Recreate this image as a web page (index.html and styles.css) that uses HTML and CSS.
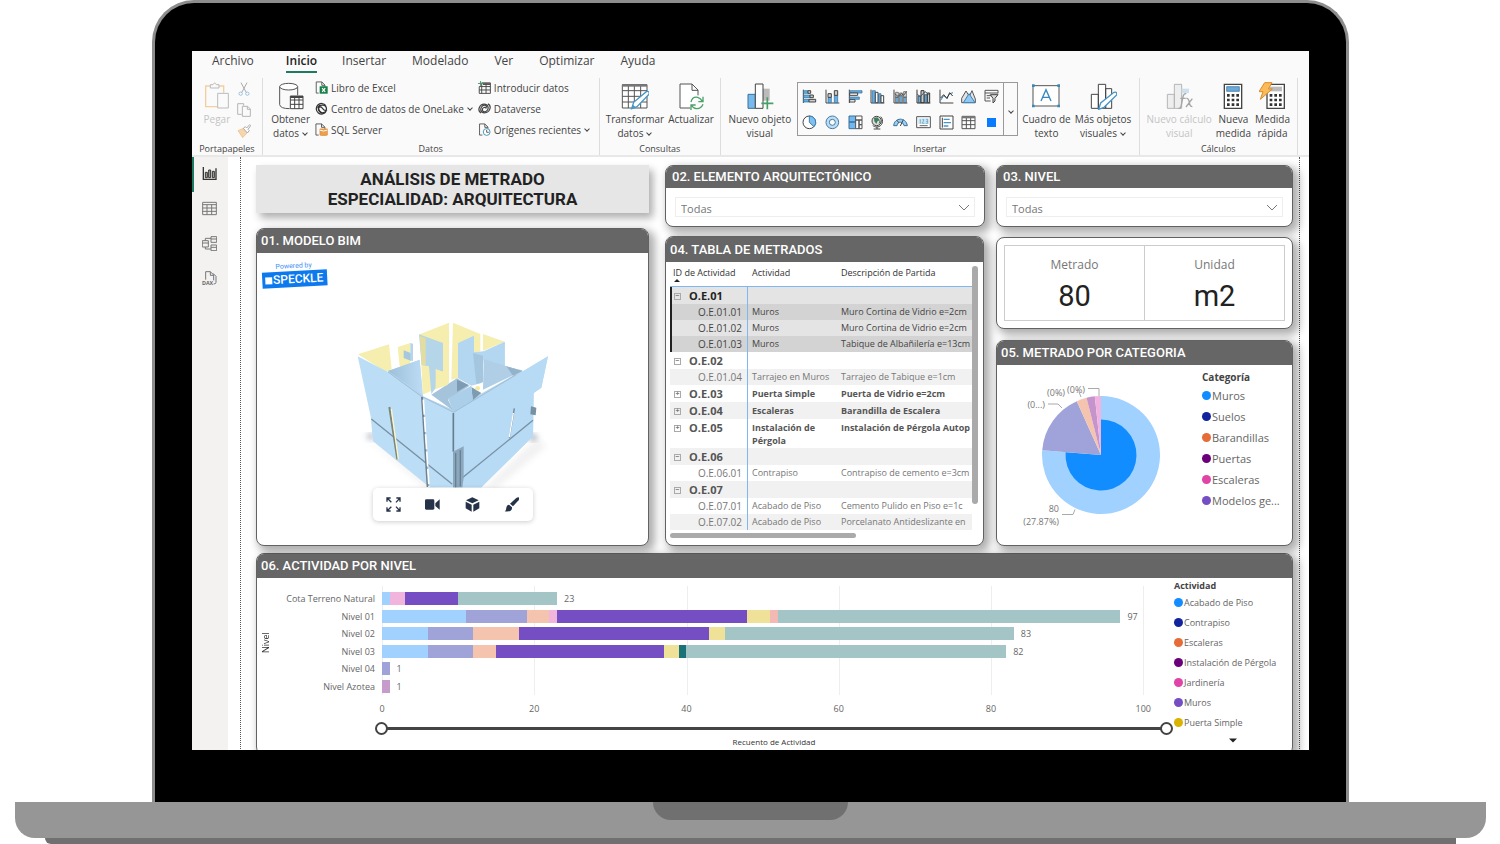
FILE: index.html
```html
<!DOCTYPE html>
<html lang="es">
<head>
<meta charset="utf-8">
<title>Análisis de metrado</title>
<link rel="stylesheet" href="styles.css">
</head>
<body>
<div class="lid">
<div class="screen">
<nav class="tabs">
<a href="#">Archivo</a><a href="#" class="current">Inicio</a><a href="#">Insertar</a><a href="#">Modelado</a><a href="#">Ver</a><a href="#">Optimizar</a><a href="#">Ayuda</a>
</nav>
<div class="ribbon">
<section class="group clipboard">
<div class="tools">
<button class="big off"><svg viewBox="0 0 84 84"><path d="M22 12H8v62h34M48 12h14v20" fill="none" stroke="#f3cf9f" stroke-width="4"/><path d="M22 18V8h8q5-10 10 0h8v10z" fill="#fafafa" stroke="#bbb" stroke-width="3"/><path d="M44 34h32v44H44z" fill="#fafafa" stroke="#bbb" stroke-width="3"/></svg><span>Pegar</span></button>
<div class="minis">
<button aria-label="Cortar"><svg viewBox="0 0 42 42"><path d="M12 2l16 30M30 2L14 32" stroke="#aaa" stroke-width="3"/><g fill="none" stroke="#9cc4df" stroke-width="3"><circle cx="11" cy="35" r="5"/><circle cx="31" cy="35" r="5"/></g></svg></button>
<button aria-label="Copiar"><svg viewBox="0 0 42 42"><path d="M14 34H2V2h18v6M16 10h16l8 8v22H16zM31 10v9h9" fill="none" stroke="#b5b5b5" stroke-width="3"/></svg></button>
<button aria-label="Copiar formato"><svg viewBox="0 0 42 42"><path d="M3 20l16-7 12 13-14 15z" fill="#f8d6ab" stroke="#e9bd88" stroke-width="2"/><path d="M19 13l6-5 4 4 9-10 3 3-8 11 4 4-6 7z" fill="#fff" stroke="#aaa" stroke-width="3"/></svg></button>
</div>
</div>
<h2>Portapapeles</h2>
</section>
<section class="group data">
<div class="tools">
<button class="big"><svg viewBox="0 0 84 84"><path d="M8 14v54q2 12 30 12M62 14v26" fill="none" stroke="#555" stroke-width="3"/><ellipse cx="35" cy="14" rx="27" ry="10" fill="#fff" stroke="#555" stroke-width="3"/><path d="M40 42h38v38H40zM40 54h38M40 67h38M53 42v38M66 42v38" fill="#fff" stroke="#444" stroke-width="3"/><path d="M40 42h38v6H40z" fill="#444"/></svg><span>Obtener<br>datos<i class="caret"></i></span></button>
<div class="list">
<button><svg viewBox="0 0 42 42"><path d="M12 39H4V3h18l10 10v6M22 3v11h10" fill="none" stroke="#555" stroke-width="3"/><path d="M15 17h26v24H15z" fill="#18804a"/><path d="M23 23l10 12M33 23L23 35" stroke="#fff" stroke-width="4"/></svg>Libro de Excel</button>
<button><svg viewBox="0 0 42 42"><g fill="none" stroke="#333" stroke-width="4"><path d="M35 12A17 17 0 1 0 36 30"/><path d="M8 18c7-12 29-11 29 4s-19 17-25 5c-5-9 4-15 10-9s6 13 17 7"/><path d="M17 8c-9 9-7 22 7 29"/></g></svg>Centro de datos de OneLake<i class="caret"></i></button>
<button><svg viewBox="0 0 42 42"><path d="M12 39H3V3h18l11 10v6M21 3v11h10" fill="none" stroke="#555" stroke-width="3"/><path d="M16 19h24v20q-12 5-24 0z" fill="#eca04d" stroke="#d98431" stroke-width="2"/><path d="M16 23q12 6 24 0" fill="none" stroke="#fff" stroke-width="3"/></svg>SQL Server</button>
</div>
<div class="list second">
<button><svg viewBox="0 0 42 42"><path d="M12 6h28v34H4V18M12 6v34M26 6v34M4 18h36M4 29h36" fill="none" stroke="#444" stroke-width="3"/><path d="M16 7h24v6H16z" fill="#555"/><path d="M8 0v16M0 8h16" stroke="#3c9c62" stroke-width="3"/></svg>Introducir datos</button>
<button><svg viewBox="0 0 42 42"><g fill="none" stroke="#444" stroke-width="4"><path d="M10 35C-4 28 5 7 20 7c13 0 16 14 9 21-6 6-15 4-15-3 0-8 10-10 13-4"/><path d="M32 6c14 7 6 29-11 29C8 35 6 22 13 14c7-6 16-4 15 4"/></g></svg>Dataverse</button>
<button><svg viewBox="0 0 42 42"><path d="M14 39H5V3h17l10 10v6M22 3v11h10" fill="none" stroke="#555" stroke-width="3"/><circle cx="28" cy="29" r="11" fill="#fff" stroke="#4191b8" stroke-width="3"/><path d="M28 22v8h7" fill="none" stroke="#555" stroke-width="3"/></svg>Orígenes recientes<i class="caret"></i></button>
</div>
</div>
<h2>Datos</h2>
</section>
<section class="group queries">
<div class="tools">
<button class="big"><svg viewBox="0 0 84 84"><path d="M4 8h74v70H4zM4 26h74M4 43h74M4 60h74M22 12v66M40 12v66M59 12v66" fill="#fff" stroke="#555" stroke-width="3"/><path d="M4 7h74v7H4z" fill="#777"/><path d="M32 80l6-19 38-32q10-3 8 8L48 74z" fill="#fff" stroke="#4596c6" stroke-width="4"/><path d="M32 80l4-12 7 7z" fill="#4596c6"/></svg><span>Transformar<br>datos<i class="caret"></i></span></button>
<button class="big"><svg viewBox="0 0 84 84"><path d="M40 78H9V6h36l18 18v16M45 6v19h18" fill="#fff" stroke="#555" stroke-width="3"/><g fill="none" stroke="#4ba06a" stroke-width="4"><path d="M42 60q4-17 20-14 9 2 14 12M78 44v15H64"/><path d="M78 67q-6 14-20 13-10-1-15-11M42 84V69h14"/></g></svg><span>Actualizar</span></button>
</div>
<h2>Consultas</h2>
</section>
<section class="group insert">
<div class="tools">
<button class="big"><svg viewBox="0 0 84 84"><path d="M6 37h22v42H6z" fill="#79b9ec" stroke="#38719f" stroke-width="3"/><path d="M51 20h20v36H51z" fill="#bbb"/><path d="M28 6h23v73H28z" fill="#fff" stroke="#444" stroke-width="3"/><path d="M64 46v36M46 64h36" stroke="#48a068" stroke-width="5"/></svg><span>Nuevo objeto<br>visual</span></button>
<div class="gallery">
<div class="visuals">
<button aria-label="Barras apiladas"><svg viewBox="0 0 45 45"><path d="M4 2v40" stroke="#444" stroke-width="3"/><path d="M5 5h13v8H5zM5 18h19v8H5zM5 31h16v8H5z" fill="#62aee8" stroke="#34698f" stroke-width="2"/><path d="M18 5h8v8h-8zM24 18h10v8H24zM21 31h20v8H21z" fill="#ccc" stroke="#444" stroke-width="3"/></svg></button>
<button aria-label="Columnas apiladas"><svg viewBox="0 0 45 45"><path d="M3 2v40h40" fill="none" stroke="#444" stroke-width="3"/><path d="M9 25h10v16H9zM28 19h10v22H28z" fill="#62aee8" stroke="#34698f" stroke-width="2"/><path d="M9 14h10v11H9zM28 5h10v14H28z" fill="#ccc" stroke="#444" stroke-width="3"/></svg></button>
<button aria-label="Barras agrupadas"><svg viewBox="0 0 45 45"><path d="M4 2v40" stroke="#444" stroke-width="3"/><path d="M5 5h37v7H5zM5 24h29v7H5z" fill="#62aee8" stroke="#34698f" stroke-width="2"/><path d="M5 12h24v7H5zM5 32h16v7H5z" fill="#fff" stroke="#444" stroke-width="3"/></svg></button>
<button aria-label="Columnas agrupadas"><svg viewBox="0 0 45 45"><path d="M3 2v40h40" fill="none" stroke="#444" stroke-width="3"/><path d="M7 5h9v36H7zM26 14h7v27h-7z" fill="#62aee8" stroke="#34698f" stroke-width="2"/><path d="M16 10h8v31h-8zM33 20h8v21h-8z" fill="#fff" stroke="#444" stroke-width="3"/></svg></button>
<button aria-label="Líneas y columnas apiladas"><svg viewBox="0 0 45 45"><path d="M3 2v40h40" fill="none" stroke="#444" stroke-width="3"/><path d="M8 24h8v17H8zM20 20h8v21h-8zM32 24h8v17h-8z" fill="#72b2df" stroke="#444" stroke-width="2"/><path d="M8 10h8v14H8zM20 12h8v8h-8zM32 8h8v16h-8z" fill="#ddd" stroke="#444" stroke-width="2"/><path d="M5 14l10 8 10-8 7 5 9-12" fill="none" stroke="#555" stroke-width="3"/></svg></button>
<button aria-label="Líneas y columnas agrupadas"><svg viewBox="0 0 45 45"><path d="M3 2v40h40" fill="none" stroke="#333" stroke-width="3"/><path d="M7 21h8v20H7zM26 17h8v24h-8z" fill="#62aee8" stroke="#333" stroke-width="2"/><path d="M15 5h9v36h-9zM34 12h7v29h-7z" fill="#ccc" stroke="#333" stroke-width="3"/><path d="M4 16l9 7 14-15 13 9" fill="none" stroke="#456" stroke-width="3"/></svg></button>
<button aria-label="Líneas"><svg viewBox="0 0 45 45"><path d="M3 2v40h40" fill="none" stroke="#444" stroke-width="3"/><path d="M5 34l9-14 9 6 10-12 9-3" fill="none" stroke="#3d86b8" stroke-width="3"/><path d="M5 27l9-10 10 12 8-18 9 10" fill="none" stroke="#333" stroke-width="3"/></svg></button>
<button aria-label="Áreas"><svg viewBox="0 0 45 45"><path d="M2 41V28L15 6l10 16L33 5l10 25v11z" fill="#e3e3e3" stroke="#555" stroke-width="3"/><path d="M7 41l17-27 18 27z" fill="#8fc8f3" stroke="#3981b5" stroke-width="3"/></svg></button>
<button aria-label="Segmentación"><svg viewBox="0 0 45 45"><path d="M20 36H3V4h39v9M3 12h39M8 20h13M8 27h10" fill="none" stroke="#555" stroke-width="3"/><path d="M19 17h23l-9 11v8l-6 6V28z" fill="#ddd" stroke="#444" stroke-width="3"/></svg></button>
<button aria-label="Circular"><svg viewBox="0 0 45 45"><circle cx="22" cy="22" r="19" fill="#fff" stroke="#444" stroke-width="3"/><path d="M22 22V3a19 19 0 0 1 14 32z" fill="#80bff0" stroke="#3981b5" stroke-width="3"/></svg></button>
<button aria-label="Anillo"><svg viewBox="0 0 45 45"><circle cx="22" cy="22" r="14" fill="none" stroke="#b9def8" stroke-width="9"/><g fill="none" stroke="#48799c" stroke-width="3"><circle cx="22" cy="22" r="19"/><circle cx="22" cy="22" r="9"/></g></svg></button>
<button aria-label="Rectángulos"><svg viewBox="0 0 45 45"><path d="M3 3h20v18H3zM3 21h20v20H3z" fill="#70b8ef" stroke="#3b719a" stroke-width="3"/><path d="M23 3h19v12H23zM23 15h10v26H23zM33 15h9v14h-9zM33 29h9v12h-9z" fill="#fff" stroke="#555" stroke-width="3"/></svg></button>
<button aria-label="Mapa"><svg viewBox="0 0 45 45"><circle cx="20" cy="18" r="14" fill="#ddd" stroke="#444" stroke-width="3"/><path d="M12 9l10-2 8 9-7 2-4 9-6-8zM29 16l4 6-7 5z" fill="#3f7d5c"/><path d="M32 5c11 11 5 30-11 31-6 0-10-2-13-5M21 36v6M11 42h20" fill="none" stroke="#444" stroke-width="3"/></svg></button>
<button aria-label="Medidor"><svg viewBox="0 0 45 45"><path d="M2 32C4 7 39 5 43 32H33c-3-14-19-14-21 0z" fill="#9acff5" stroke="#3b719a" stroke-width="3"/><path d="M22 33l9-19M12 16l5 7" stroke="#444" stroke-width="3"/></svg></button>
<button aria-label="Tarjeta"><svg viewBox="0 0 45 45"><path d="M2 5h41v33H2z" fill="#fff" stroke="#555" stroke-width="3"/><path d="M7 10h31v17H7z" fill="#cfe5f4"/><path d="M13 13v13M19 14h5l-5 11h6M30 13h5v12h-6M30 19h5" fill="none" stroke="#5097bd" stroke-width="2"/><path d="M11 32h24" stroke="#666" stroke-width="3"/></svg></button>
<button aria-label="Tarjeta múltiple"><svg viewBox="0 0 45 45"><path d="M3 3h39v39H3z" fill="#fff" stroke="#444" stroke-width="3"/><path d="M10 8v30" stroke="#444" stroke-width="3"/><path d="M14 13h18M14 23h22M14 33h14" stroke="#4596c6" stroke-width="4"/></svg></button>
<button aria-label="Tabla"><svg viewBox="0 0 45 45"><path d="M3 4h39v37H3zM3 17h39M3 29h39M16 5v36M29 5v36" fill="#fff" stroke="#555" stroke-width="3"/><path d="M3 4h39v6H3z" fill="#777"/></svg></button>
<button aria-label="Speckle"><svg viewBox="0 0 45 45"><path d="M9 9h27v27H9z" fill="#087bff"/></svg></button>
</div>
<button class="more" aria-label="Más visuales"><i class="caret"></i></button>
</div>
<button class="big"><svg viewBox="0 0 84 84"><path d="M3 11h78v61H3z" fill="#fff" stroke="#555" stroke-width="3"/><path d="M0 7h8v8H0zM76 7h8v8h-8zM0 68h8v8H0zM76 68h8v8h-8z" fill="#3789bd"/><path d="M27 57l15-34 15 34M33 46h18" fill="none" stroke="#3789bd" stroke-width="4"/></svg><span>Cuadro de<br>texto</span></button>
<button class="big"><svg viewBox="0 0 84 84"><path d="M7 37h21v42H7zM28 7h22v72H28zM50 20h18v59H50z" fill="#fff" stroke="#444" stroke-width="3"/><path d="M29 82l6-19 40-32q10-3 8 8L45 76z" fill="#fff" stroke="#4596c6" stroke-width="4"/></svg><span>Más objetos<br>visuales<i class="caret"></i></span></button>
</div>
<h2>Insertar</h2>
</section>
<section class="group calc">
<div class="tools">
<button class="big off"><svg viewBox="0 0 84 84"><path d="M7 37h21v42H7zM28 7h22v72H28z" fill="#eee" stroke="#b5b5b5" stroke-width="3"/><path d="M50 20h22v13H50z" fill="#cde0ee"/><path d="M64 35q-8-2-10 10l-6 28q-2 7-8 6M46 49h16M64 49q7-1 9 12t9 13M82 50L63 75" fill="none" stroke="#a5a5a5" stroke-width="4"/></svg><span>Nuevo cálculo<br>visual</span></button>
<button class="big"><svg viewBox="0 0 84 84"><path d="M16 7h52v72H16z" fill="#fff" stroke="#444" stroke-width="4"/><path d="M23 14h38v14H23z" fill="#68abdd" stroke="#366891" stroke-width="2"/><path d="M24 40h36M24 54h36M24 68h36" stroke="#333" stroke-width="8" stroke-dasharray="8 6"/></svg><span>Nueva<br>medida</span></button>
<button class="big"><svg viewBox="0 0 84 84"><path d="M24 7h52v72H24z" fill="#fff" stroke="#444" stroke-width="4"/><path d="M31 14h38v14H31z" fill="#bbb"/><path d="M32 40h36M32 54h36M32 68h36" stroke="#333" stroke-width="8" stroke-dasharray="8 6"/><path d="M17 2h22L28 21h12L4 52l8-23H0z" fill="#f9bb5b" stroke="#dd8b25" stroke-width="3"/></svg><span>Medida<br>rápida</span></button>
</div>
<h2>Cálculos</h2>
</section>
</div>
<div class="work">
<nav class="rail">
<a href="#" class="on" aria-label="Informe"><svg viewBox="0 0 45 45"><path d="M4 3v37h38V7" fill="none" stroke="#333" stroke-width="4"/><path d="M10 19h6v16h-6zM20 12h6v23h-6zM31 16h6v19h-6z" fill="#aaa" stroke="#333" stroke-width="3"/></svg></a>
<a href="#" aria-label="Tabla"><svg viewBox="0 0 45 45"><path d="M2 4h41v37H2zM2 11h41M2 21h41M2 31h41M15 11v30M29 11v30" fill="none" stroke="#777" stroke-width="3"/></svg></a>
<a href="#" aria-label="Modelo"><svg viewBox="0 0 45 45"><path d="M1 14h18v19H1zM1 21h18M27 2h17v17H27zM27 9h17M27 27h17v17H27zM27 34h17M10 14V7h17M10 33v6h17" fill="none" stroke="#777" stroke-width="3"/></svg></a>
<a href="#" aria-label="DAX"><svg viewBox="0 0 45 45"><path d="M11 26V2h14l10 10v16M25 2v11h10M33 7l9 9v18q0 5-7 5" fill="none" stroke="#777" stroke-width="3"/><text x="0" y="43" class="dax">DAX</text></svg></a>
</nav>
<main class="canvas">
<div class="top">
<div class="col left">
<h1>ANÁLISIS DE METRADO<br>ESPECIALIDAD: ARQUITECTURA</h1>
<section class="panel model">
<h3>01. MODELO BIM</h3>
<div class="speckle"><small>Powered by</small><b><i></i>SPECKLE</b></div>
<svg class="building" viewBox="40 55 600 510" role="img" aria-label="Modelo 3D">
<defs><linearGradient id="sh" x1="0" x2="1"><stop offset="0" stop-color="#9dbfd9"/><stop offset="1" stop-color="#bcdcf4"/></linearGradient><filter id="bl"><feGaussianBlur stdDeviation="9"/></filter></defs>
<path d="M70 408L300 560H440L590 415L620 440L470 565H260z" fill="#ddd" filter="url(#bl)" opacity=".4"/>
<path d="M80 408l20-8v22zM570 400l24 12-18 14z" fill="#7d8b98" filter="url(#bl)"/>
<path d="M55 164L148 134L156 208L140 218zM174 142L212 130V216L180 200zM240 104L328 69V250L250 284L245 185zM340 69L422 103V155L398 162L355 235L335 240zM430 103L495 126L430 153z" fill="#f5eeaf"/>
<path d="M145 214L240 180L250 290L340 330L540 216L430 180L495 126V200L548 212L560 300L345 420L180 300z" fill="#b4d5ed"/>
<path d="M145 214L240 181L248 285z" fill="url(#sh)"/>
<path d="M245 185L262 190L272 275L250 284z" fill="#f5eeaf"/>
<path d="M238 104L310 130V216L288 208V265L275 283L268 200L246 196z" fill="#b5d5e8"/>
<path d="M240 108L258 116V196H246z" fill="#e3dda2"/>
<path d="M355 130L403 108V158L432 155L495 126V200L432 178L425 250L395 258L355 236z" fill="#b3d6f1"/>
<path d="M400 160l30 8v80l-20 5z" fill="#a5c6df"/>
<path d="M192 152l23 9v23l-23-9z" fill="#a6c8df"/><path d="M212 130l8 2v52l-8-2z" fill="#b4d5ed"/>
<path d="M432 178L548 214L430 270z" fill="#b0cfe7"/>
<path d="M500 200L548 214L520 228z" fill="#94b3cb"/>
<path d="M275 285L352 236L390 258L325 300L342 334z" fill="#a5c4db"/><path d="M352 240l35 16-35 20zM395 262l30 18-26 22z" fill="#7d9bb2"/><path d="M325 296L395 258L400 305L342 338z" fill="#accfe9"/><circle cx="414" cy="266" r="7" fill="#f5e8a0"/>
<path d="M290 210l34 10v36l-36 12z" fill="#f5eeaf"/>
<path d="M54 170L145 217L245 290L342 338L555 212L625 170L605 264L582 280L580 410L425 563H270L100 425L93 350z" fill="#bbddf6"/>
<path d="M342 338L555 212L625 170L605 264L582 280L580 410L425 563H340z" fill="#b7daf5"/>
<path d="M145 217L245 290L342 338L530 225" fill="none" stroke="#94b1c6" stroke-width="2"/>
<path d="M95 358L338 554M368 534L580 362" stroke="#7890a2" stroke-width="4"/>
<path d="M341 340V456" stroke="#667e90" stroke-width="5"/>
<path d="M340 456l32-16v95l-4 28h-28z" fill="#8ba7bc"/><path d="M348 460v103M362 452v108" stroke="#678095" stroke-width="4"/>
<path d="M149 322l24 157" stroke="#7b8878" stroke-width="6"/><path d="M155 328l21 151" stroke="#fff5ca" stroke-width="4"/>
<path d="M247 292l17 270" stroke="#70818f" stroke-width="6"/><path d="M251 300l17 262" stroke="#fff" stroke-width="5" stroke-dasharray="45 7"/>
<path d="M524 326l-15 88" stroke="#6e889c" stroke-width="4"/><path d="M521 340l-12 72" stroke="#fff" stroke-width="4"/>
<path d="M574 320l16 4-2 23-16-3z" fill="#7892a5"/>
</svg>
<div class="viewer">
<button aria-label="Ajustar"><svg viewBox="0 0 45 45"><path d="M3 14V3h11M4 4l12 12M31 3h11v11M41 4L30 16M3 31v11h11M4 41l12-12M31 42h11V31M41 41L30 29" fill="none" stroke="#263248" stroke-width="4"/></svg></button>
<button aria-label="Cámara"><svg viewBox="0 0 45 45"><rect x="0" y="7" width="28" height="31" rx="4" fill="#263248"/><path d="M31 19L44 7v31L31 27z" fill="#263248"/></svg></button>
<button aria-label="Cubo"><svg viewBox="0 0 45 45"><path d="M22 1l19 9-19 9-19-9zM2 14l18 9v21L2 34zM43 14l-18 9v21l18-10z" fill="#263248"/></svg></button>
<button aria-label="Pincel"><svg viewBox="0 0 45 45"><path d="M44 1q4 5-3 12L27 28l-9-8L36 4q5-4 8-3z" fill="#263248"/><path d="M15 23l9 8c1 11-8 14-22 12 8-4 1-18 13-20z" fill="#263248"/></svg></button>
</div>
</section>
</div>
<div class="col middle">
<section class="panel filter">
<h3><label for="elemento">02. ELEMENTO ARQUITECTÓNICO</label></h3>
<div class="pick"><select id="elemento"><option>Todas</option></select><svg viewBox="0 0 12 7"><path d="M1 1l5 5 5-5" fill="none" stroke="#777"/></svg></div>
</section>
<section class="panel sheet">
<h3>04. TABLA DE METRADOS</h3>
<div class="scroller">
<div class="clip">
<table>
<colgroup><col class="c1"><col class="c2"><col class="c3"></colgroup>
<thead><tr><th>ID de Actividad<i></i></th><th>Actividad</th><th>Descripción de Partida</th></tr></thead>
<tbody>
<tr class="g sel"><td><button class="box">−</button>O.E.01</td><td></td><td></td></tr>
<tr class="sel dark"><td>O.E.01.01</td><td>Muros</td><td>Muro Cortina de Vidrio e=2cm</td></tr>
<tr class="sel"><td>O.E.01.02</td><td>Muros</td><td>Muro Cortina de Vidrio e=2cm</td></tr>
<tr class="sel dark"><td>O.E.01.03</td><td>Muros</td><td>Tabique de Albañilería e=13cm</td></tr>
<tr class="g"><td><button class="box">−</button>O.E.02</td><td></td><td></td></tr>
<tr class="alt"><td>O.E.01.04</td><td>Tarrajeo en Muros</td><td>Tarrajeo de Tabique e=1cm</td></tr>
<tr class="g"><td><button class="box">+</button>O.E.03</td><td>Puerta Simple</td><td>Puerta de Vidrio e=2cm</td></tr>
<tr class="g alt"><td><button class="box">+</button>O.E.04</td><td>Escaleras</td><td>Barandilla de Escalera</td></tr>
<tr class="g tall"><td><button class="box">+</button>O.E.05</td><td>Instalación de<br>Pérgola</td><td>Instalación de Pérgola Autop</td></tr>
<tr class="g alt"><td><button class="box">−</button>O.E.06</td><td></td><td></td></tr>
<tr><td>O.E.06.01</td><td>Contrapiso</td><td>Contrapiso de cemento e=3cm</td></tr>
<tr class="g alt"><td><button class="box">−</button>O.E.07</td><td></td><td></td></tr>
<tr><td>O.E.07.01</td><td>Acabado de Piso</td><td>Cemento Pulido en Piso e=1c</td></tr>
<tr class="alt"><td>O.E.07.02</td><td>Acabado de Piso</td><td>Porcelanato Antideslizante en</td></tr>
</tbody>
</table>
</div>
<div class="vbar"></div>
</div>
<div class="hbar"></div>
</section>
</div>
<div class="col right">
<section class="panel filter">
<h3><label for="nivel">03. NIVEL</label></h3>
<div class="pick"><select id="nivel"><option>Todas</option></select><svg viewBox="0 0 12 7"><path d="M1 1l5 5 5-5" fill="none" stroke="#777"/></svg></div>
</section>
<section class="panel cards">
<div><span>Metrado</span><strong>80</strong></div><div><span>Unidad</span><strong>m2</strong></div>
</section>
<section class="panel category">
<h3>05. METRADO POR CATEGORIA</h3>
<div class="piebox">
<svg class="pie" viewBox="0 0 180 175">
<path d="M86 86V27A59 59 0 1 1 27.2 81.3z" fill="#a0d1ff"/><path d="M86 86V50.5A35.5 35.5 0 1 1 50.6 83.2z" fill="#118dff"/>
<path d="M86 86L27.2 81.3A59 59 0 0 1 61.8 32.2z" fill="#a0a3da"/><path d="M86 86L61.8 32.2A59 59 0 0 1 71.5 28.8z" fill="#f5c4af"/><path d="M86 86L71.5 28.8A59 59 0 0 1 79.8 27.3z" fill="#c594cc"/><path d="M86 86L79.8 27.3A59 59 0 0 1 86 27z" fill="#f0b2df"/>
<path d="M33 35h10l4 4M73 19.500h11V27M64 23l2 5M47 145.500h11l2-5" fill="none" stroke="#aaa"/>
<text x="50" y="27" text-anchor="end">(0%)</text><text x="70" y="24" text-anchor="end">(0%)</text><text x="30" y="39" text-anchor="end">(0...)</text><text x="44" y="143" text-anchor="end">80</text><text x="44" y="156" text-anchor="end">(27.87%)</text>
</svg>
<ul class="legend"><li class="name">Categoría</li><li><i class="k1"></i>Muros</li><li><i class="k2"></i>Suelos</li><li><i class="k3"></i>Barandillas</li><li><i class="k4"></i>Puertas</li><li><i class="k5"></i>Escaleras</li><li><i class="k6"></i>Modelos ge...</li></ul>
</div>
</section>
</div>
</div>
<section class="panel activity">
<h3>06. ACTIVIDAD POR NIVEL</h3>
<div class="chart">
<div class="ytitle">Nivel</div>
<div class="ylabels"><span>Cota Terreno Natural</span><span>Nivel 01</span><span>Nivel 02</span><span>Nivel 03</span><span>Nivel 04</span><span>Nivel Azotea</span></div>
<div class="plot">
<div class="bars">
<div><i class="blue" style="width:.971%"></i><i class="pink" style="width:1.942%"></i><i class="purple" style="width:6.797%"></i><i class="teal" style="width:12.623%"></i><b>23</b></div>
<div><i class="blue" style="width:10.681%"></i><i class="lilac" style="width:7.768%"></i><i class="peach" style="width:2.913%"></i><i class="pink" style="width:.971%"></i><i class="purple" style="width:24.275%"></i><i class="yellow" style="width:2.913%"></i><i class="rose" style="width:.971%"></i><i class="teal" style="width:43.695%"></i><b>97</b></div>
<div><i class="blue" style="width:5.826%"></i><i class="lilac" style="width:5.826%"></i><i class="peach" style="width:5.826%"></i><i class="purple" style="width:24.275%"></i><i class="yellow" style="width:1.942%"></i><i class="teal" style="width:36.898%"></i><b>83</b></div>
<div><i class="blue" style="width:5.826%"></i><i class="lilac" style="width:5.826%"></i><i class="peach" style="width:2.913%"></i><i class="purple" style="width:21.362%"></i><i class="yellow" style="width:1.942%"></i><i class="deep" style="width:.971%"></i><i class="teal" style="width:40.782%"></i><b>82</b></div>
<div><i class="lilac" style="width:.971%"></i><b>1</b></div>
<div><i class="mauve" style="width:.971%"></i><b>1</b></div>
</div>
<div class="ticks"><span>0</span><span>20</span><span>40</span><span>60</span><span>80</span><span>100</span></div>
<div class="range"><input type="range" aria-label="Mínimo" min="0" max="100" value="0"><input type="range" aria-label="Máximo" min="0" max="100" value="100"></div>
<div class="xtitle">Recuento de Actividad</div>
</div>
<ul class="legend"><li class="name">Actividad</li><li><i class="k1"></i>Acabado de Piso</li><li><i class="k2"></i>Contrapiso</li><li><i class="k3"></i>Escaleras</li><li><i class="k4"></i>Instalación de Pérgola</li><li><i class="k5"></i>Jardinería</li><li><i class="k6"></i>Muros</li><li><i class="k7"></i>Puerta Simple</li><li class="next"><svg viewBox="0 0 10 5"><path d="M0 0h10L5 5z" fill="#222"/></svg></li></ul>
</div>
</section>
</main>
</div>
</div>
</div>
<div class="base"><div class="notch"></div></div>
<div class="foot"></div>
</body>
</html>
```
FILE: styles.css
```css
* { box-sizing: border-box; }
body {
  margin: 0; height: 100vh; overflow: hidden; background: #fff;
  display: flex; flex-direction: column;
  font-family: "Open Sans", "Noto Sans", sans-serif; font-size: 10px; color: #444;
}
h1, h2, h3, ul { margin: 0; padding: 0; }
ul { list-style: none; }
i { font-style: normal; }
button { border: 0; background: none; padding: 0; margin: 0; font: inherit; color: inherit; }
a { color: inherit; text-decoration: none; }
svg { display: block; }

.lid {
  flex: 1; min-height: 0; display: flex; margin: 0 151px 0 152px; padding: 48px 37px 52px;
  border: 3px solid #8d8d8d; border-bottom: 0; border-radius: 42px 42px 0 0; background: #000;
}
.screen { flex: 1; min-width: 0; overflow: hidden; background: #fff; display: flex; flex-direction: column; }
.base { height: 36px; margin: 0 14px 0 15px; background: #969696; border-radius: 0 0 20px 20px; flex: none; display: flex; justify-content: center; }
.notch { width: 195px; height: 18px; background: #707070; border-radius: 0 0 18px 18px; }
.foot { height: 6px; margin: 0 44px 0 45px; background: #707070; border-radius: 0 0 0 6px; flex: none; }

.tabs { display: flex; gap: 26px; padding: 0 20px; height: 25px; background: #fafafa; font-size: 12px; line-height: 20px; flex: none; }
.tabs .current { font-weight: 600; color: #222; border-bottom: 2px solid #1f7a62; height: 22px; margin-left: 6px; }
.tabs .current + a { margin-left: -1px; }
.ribbon { display: flex; flex: none; height: 81px; background: #fafafa; border-bottom: 2px solid #e8e8e8; }
.group { display: flex; flex-direction: column; justify-content: space-between; border-right: 1px solid #ddd; margin: 2px 0 0; padding: 4px 0 0; }
.group h2 { font-size: 9px; font-weight: 400; line-height: 12px; text-align: center; }
.tools { display: flex; justify-content: center; align-items: flex-start; }
.clipboard { flex: 70 1 0; }
.data { flex: 337 1 0; }
.queries { flex: 121 1 0; }
.insert { flex: 419 1 0; }
.calc { flex: 158 1 0; margin-right: 11px; }
.big { display: flex; flex-direction: column; align-items: center; line-height: 14px; white-space: nowrap; }
.big svg { width: 28px; height: 28px; margin-bottom: 2px; }
.off { color: #c4c4c4; }
.caret { display: inline-block; width: 4px; height: 4px; margin: 0 1px 2px 4px; border: solid #444; border-width: 0 1px 1px 0; transform: rotate(45deg); }
.minis { display: flex; flex-direction: column; gap: 7px; margin-left: 6px; }
.minis svg { width: 14px; height: 14px; }
.list { display: flex; flex-direction: column; margin-left: 5px; margin-top: -5px; }
.list button { display: flex; align-items: center; height: 21px; white-space: nowrap; }
.list svg { width: 13px; height: 13px; margin-right: 3px; }
.insert .tools { gap: 4px; }
.queries .tools, .calc .tools { gap: 4px; }
.gallery { display: flex; border: 1px solid #999; height: 54px; margin-left: 2px; }
.visuals { display: grid; grid-template-columns: repeat(9, 1fr); align-items: center; justify-items: center; width: 205px; }
.visuals svg { width: 15px; height: 15px; }
.more { width: 14px; border-left: 1px solid #999; }
.more .caret { margin: 0; }

.work { display: flex; flex: 1; min-height: 0; }
.rail { width: 36px; background: #f3f2f1; flex: none; }
.rail a { display: flex; align-items: center; justify-content: center; height: 35px; border-left: 2px solid transparent; padding: 0 4px 3px 0; }
.rail .on { border-color: #1f7a62; }
.rail svg { width: 15px; height: 15px; }
.dax { font: 700 16px "Open Sans", sans-serif; fill: #666; }
.canvas { flex: 1; min-width: 0; margin: 0 9px 0 12px; padding: 8px 6px 0 15px; border: dotted #555; border-width: 0 1px; height: 600px; }
.top { display: flex; height: 381px; }
.col { display: flex; flex-direction: column; min-width: 0; }
.left { flex: 393 1 0; gap: 15px; }
.middle { flex: 320 1 0; margin: 0 11px 0 16px; gap: 9px; }
.right { flex: 297 1 0; gap: 10px; }
h1 {
  font: 700 17px/20px Roboto, sans-serif; color: #222; text-align: center; height: 48px; padding: 4px 0;
  background: #e6e6e6; box-shadow: 4px 5px 8px rgba(0,0,0,.32);
}
.panel { border: 1px solid #626262; border-radius: 8px; background: #fff; box-shadow: 4px 4px 9px 2px rgba(0,0,0,.32); display: flex; flex-direction: column; overflow: hidden; }
.panel h3 { font: 500 13px/24px Roboto, sans-serif; color: #fff; background: #666; padding: 0 4px; flex: none; }
.panel.filter h3 { line-height: 22px; padding-left: 6px; }
.panel.sheet h3 { line-height: 25px; }
.filter { height: 62px; flex: none; }
.pick { display: flex; align-items: center; margin: 9px 9px; border: 1px solid #eee; height: 23px; padding-right: 4px; }
.pick select { appearance: none; flex: 1; border: 0; background: none; font: 11px "Open Sans", sans-serif; color: #777; padding: 3px 5px 0; }
.pick svg { width: 12px; height: 7px; }

.model { flex: 1; align-items: center; }
.model h3 { align-self: stretch; }
.speckle { align-self: flex-start; margin: 9px 0 0 4px; width: 66px; height: 25px; transform: rotate(-3deg); display: flex; flex-direction: column; align-items: center; color: #3d8ff5; }
.speckle small { font: 7px/9px Roboto, sans-serif; }
.speckle b { display: flex; align-items: center; justify-content: center; gap: 1px; width: 65px; height: 16px; background: #0d79ee; color: #fff; font: 500 12px/16px Roboto, sans-serif; }
.speckle i { width: 7px; height: 7px; background: #fff; }
.building { width: 200px; height: 170px; margin-top: 31px; }
.viewer { display: flex; justify-content: space-between; align-items: center; width: 160px; height: 33px; padding: 0 13px; background: #fff; border-radius: 5px; box-shadow: 0 1px 5px rgba(0,0,0,.2); position: relative; }
.viewer svg { width: 15px; height: 15px; }

.sheet { flex: 1; margin-right: 1px; }
.scroller { display: flex; padding: 0 5px 0 4px; }
.clip { flex: 1; min-width: 0; overflow: hidden; }
table { width: 320px; table-layout: fixed; border-collapse: separate; border-spacing: 0; font-size: 9px; line-height: 13px; color: #777; white-space: nowrap; }
.c1 { width: 78px; }
.c2 { width: 89px; }
th { font-weight: 400; text-align: left; height: 25px; padding: 4px 0 0 4px; vertical-align: top; color: #333; border-bottom: 1px solid #7db9f0; }
th:first-child { padding-left: 3px; }
th i { display: block; width: 0; border: solid transparent; border-width: 0 3px 3px; border-bottom-color: #222; margin-left: 1px; }
td { height: 16px; padding: 0 0 0 4px; vertical-align: top; line-height: 16px; }
td:first-child { border-left: 2px solid transparent; border-right: 1px solid #7db9f0; text-align: right; padding: 0 5px 0 2px; font-size: 10px; }
.g td { height: 17px; font-weight: 700; color: #555; line-height: 17px; }
.g td:first-child { text-align: left; font-size: 11px; padding-left: 2px; }
.g.tall td { height: 29px; line-height: 13px; padding-top: 2px; }
.sel { background: #e4e4e4; color: #444; }
.sel td:first-child { border-left-color: #222; }
.sel.g td { color: #222; }
.dark { background: #d3d3d3; }
.alt { background: #f1f1f1; }
.box { width: 7px; height: 7px; border: 1px solid #aaa; font-size: 7px; line-height: 4px; vertical-align: 2px; margin-right: 8px; color: #777; }
.vbar { width: 6px; height: 238px; margin-top: 4px; border-radius: 3px; background: #aaa; }
.hbar { width: 186px; height: 5px; margin: 3px 4px; border-radius: 3px; background: #aaa; }

.cards { flex-direction: row; height: 92px; padding: 7px; flex: none; }
.cards div { flex: 1; border: 1px solid #ccc; display: flex; flex-direction: column; align-items: center; padding-top: 9px; }
.cards div + div { border-left: 0; }
.cards span { font-size: 12px; line-height: 20px; color: #777; }
.cards strong { font: 400 29px/42px Roboto, sans-serif; color: #222; }
.category { flex: 1; margin-top: 1px; }
.piebox { display: flex; padding: 4px 0 0 18px; }
.pie { width: 180px; height: 175px; flex: none; }
.pie text { font: 9px "Open Sans", sans-serif; fill: #777; }
.legend { color: #666; white-space: nowrap; }
.legend li { display: flex; align-items: center; gap: 1px; }
.legend .name { font-weight: 700; color: #444; }
.legend i { width: 9px; height: 9px; border-radius: 50%; flex: none; }
.category .legend { font-size: 11px; margin-left: 7px; }
.category .legend li { height: 21px; }
.category .legend .name { height: 16px; font-size: 10px; }
.k1 { background: #118dff; }
.k2 { background: #12239e; }
.k3 { background: #e66c37; }
.k4 { background: #6b007b; }
.k5 { background: #e044a7; }
.k6 { background: #744ec2; }
.k7 { background: #d9b300; }

.activity { margin-top: 7px; height: 202px; }
.chart { display: flex; font-size: 9px; color: #666; }
.ytitle { writing-mode: vertical-rl; transform: rotate(180deg); width: 18px; height: 130px; text-align: center; line-height: 18px; color: #333; }
.ylabels { display: grid; grid-auto-rows: 1fr; width: 100px; height: 105px; margin-top: 12px; align-items: center; text-align: right; flex: none; }
.plot { flex: 1; min-width: 0; margin: 8px 8px 0 7px; }
.bars { display: grid; grid-auto-rows: 1fr; height: 109px; padding-top: 4px; background: repeating-linear-gradient(90deg, #eee 0 1px, transparent 1px 19.42%); }
.bars div { display: flex; align-items: center; }
.bars i { height: 13px; flex: none; }
.bars b { font-weight: 400; margin-left: 7px; }
.blue { background: #a0d1ff; }
.pink { background: #f1b4dc; }
.purple { background: #744ec2; }
.teal { background: #a3c5c6; }
.lilac { background: #a0a3d8; }
.peach { background: #f5c4af; }
.yellow { background: #f0e199; }
.rose { background: #f3b9b5; }
.deep { background: #197278; }
.mauve { background: #c59cca; }
.ticks { display: grid; grid-template-columns: repeat(6, 19.42%); height: 26px; line-height: 28px; }
.ticks span { width: 20px; margin-left: -10px; text-align: center; }
.range { display: grid; height: 14px; margin: 0 -7px; align-items: center; background: linear-gradient(#444, #444) center / 98% 3px no-repeat; }
.range input { grid-area: 1 / 1; appearance: none; width: 100%; height: 14px; margin: 0; background: none; pointer-events: none; }
.range input::-webkit-slider-thumb { appearance: none; width: 13px; height: 13px; border: 2px solid #444; border-radius: 50%; background: #fff; pointer-events: auto; }
.xtitle { text-align: center; font-size: 8px; line-height: 14px; color: #333; }
.activity .legend { width: 118px; flex: none; }
.activity .legend li { height: 20px; }
.activity .legend .name { height: 14px; }
.activity .legend .next { justify-content: center; height: 16px; }
.next svg { width: 8px; height: 5px; }
```
